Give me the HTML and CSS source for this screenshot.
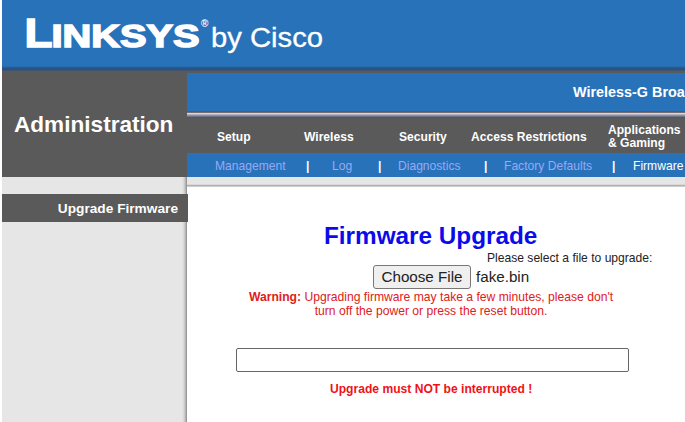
FILE: index.html
```html
<!DOCTYPE html>
<html lang="en">
<head>
<meta charset="utf-8">
<title>Firmware Upgrade</title>
<link rel="stylesheet" href="styles.css">
</head>
<body>
<div class="page">
  <header class="brand">
    <svg class="logo" width="330" height="66" viewBox="0 0 330 66" role="img" aria-label="Linksys by Cisco">
      <g class="logo-bold">
        <text x="22.5" y="46.5" font-size="40" textLength="28" lengthAdjust="spacingAndGlyphs">L</text>
        <text x="49.5" y="46.5" font-size="31" textLength="148" lengthAdjust="spacingAndGlyphs">INKSYS</text>
      </g>
      <text class="logo-mark" x="199" y="27" font-size="10">®</text>
      <text class="logo-thin" x="209" y="47" font-size="27" textLength="112" lengthAdjust="spacingAndGlyphs">by Cisco</text>
    </svg>
  </header>
  <div class="masthead">
    <div class="section"><h1>Administration</h1></div>
    <div class="menus">
      <div class="model">Wireless-G Broadband Router</div>
      <div class="rule"></div>
      <nav class="tabs">
        <span>Setup</span><span>Wireless</span><span>Security</span><span>Access Restrictions</span><span>Applications<br>&amp; Gaming</span>
      </nav>
      <nav class="subtabs">
        <span>Management</span><b>|</b><span>Log</span><b>|</b><span>Diagnostics</span><b>|</b><span>Factory Defaults</span><b>|</b><span class="current">Firmware</span>
      </nav>
    </div>
  </div>
  <div class="body">
    <aside><div class="label">Upgrade Firmware</div></aside>
    <main>
      <h2>Firmware Upgrade</h2>
      <p class="prompt">Please select a file to upgrade:</p>
      <div class="picker"><button type="button">Choose File</button><span>fake.bin</span></div>
      <p class="warning"><b>Warning:</b> Upgrading firmware may take a few minutes, please don't<br>turn off the power or press the reset button.</p>
      <div class="progress"></div>
      <p class="notice">Upgrade must NOT be interrupted !</p>
    </main>
  </div>
</div>
</body>
</html>
```
FILE: styles.css
```css
* { box-sizing: border-box; }
body {
  margin: 0;
  overflow: hidden;
  background: #fff;
  font-family: "Liberation Sans", Arial, sans-serif;
  font-size: 12.1px;
}
h1, h2, p { margin: 0; }
.page {
  width: 683px;
  height: 422px;
  margin-left: 2px;
  overflow: hidden;
  white-space: nowrap;
}
.brand {
  height: 71px;
  background: linear-gradient(#2872ba 0 66px, #24558a 68px, #2d517b 70px, #565b62 71px);
}
.logo { display: block; fill: #fff; }
.logo-bold { font-weight: bold; stroke: #fff; stroke-width: 1.5; }
.logo-mark { font-weight: bold; }
.logo-thin { stroke: #fff; stroke-width: 0.3; }
.masthead {
  display: flex;
  height: 106px;
  background: #5a5a5a;
}
.section {
  width: 185px;
  padding: 40px 0 0 12px;
}
.section h1 {
  color: #fff;
  font-size: 22.6px;
  line-height: 28px;
}
.menus { width: 498px; overflow: hidden; }
.model {
  height: 38px;
  margin-top: 2px;
  padding-left: 386px;
  background: #2872ba;
  color: #fff;
  font-size: 14.4px;
  font-weight: bold;
  line-height: 39px;
}
.rule {
  height: 7px;
  background: linear-gradient(#5a5a5a 0 1px, #776d70 1px 2px, #ded5dc 2px 3px, #b5b2bd 3px 4px, #8c91a0 4px 5px, #68758a 5px 6px, #51565f 6px);
}
.tabs {
  display: grid;
  grid-template-columns: 87px 95px 72px 137px 100px;
  align-items: center;
  height: 35px;
  padding: 3px 0 0 30px;
  color: #fff;
  font-weight: bold;
  line-height: 13px;
}
.subtabs {
  display: grid;
  grid-template-columns: 91px 26px 46px 20px 86px 20px 108px 21px 80px;
  height: 24px;
  padding-left: 28px;
  background: #2872ba;
  color: #96aaf4;
  line-height: 27px;
}
.subtabs b, .subtabs .current { color: #fff; }
.body { display: flex; height: 245px; }
aside {
  width: 185px;
  padding-top: 17px;
  background: linear-gradient(90deg, #e6e6e6 0 180px, #d5d5d5 182px, #aaa 184px, #858585 185px);
}
.label {
  position: relative;
  width: 186px;
  height: 28px;
  padding-right: 10px;
  background: #5a5a5a;
  color: #fff;
  font-size: 13.7px;
  font-weight: bold;
  line-height: 30px;
  text-align: right;
}
main {
  width: 498px;
  padding-top: 44px;
  background: linear-gradient(#e6e6e6 0 7px, #ccc 8px, #999 9px, #fff 10px);
}
h2 {
  padding-left: 137px;
  color: #0b0bea;
  font-size: 24.3px;
  line-height: 30px;
}
.prompt {
  padding-left: 300px;
  color: #222;
  line-height: 14px;
}
.picker {
  display: flex;
  gap: 5px;
  height: 24px;
  padding-left: 186px;
  color: #222;
  font-size: 15.2px;
  line-height: 24px;
}
.picker button {
  width: 98px;
  height: 24px;
  padding: 0;
  border: 1px solid #777;
  border-radius: 3px;
  background: #efefef;
  color: #222;
  font: inherit;
  line-height: 22px;
}
.warning {
  width: 488px;
  padding-top: 1px;
  color: #e02020;
  font-size: 12.15px;
  line-height: 14px;
  text-align: center;
}
.progress {
  width: 393px;
  height: 24px;
  margin: 30px 0 0 49px;
  border: 1px solid #666;
  border-radius: 2px;
}
.notice {
  padding: 9px 0 0 143px;
  color: #f01218;
  font-weight: bold;
  line-height: 16px;
}
```
